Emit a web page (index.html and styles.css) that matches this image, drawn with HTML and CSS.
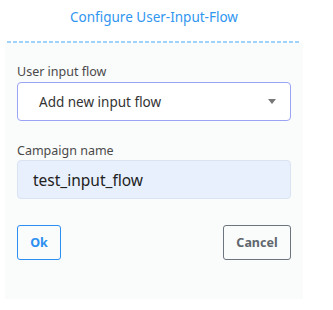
FILE: index.html
```html
<!DOCTYPE html>
<html lang="en">
<head>
    <meta charset="UTF-8">
    <title>Configure User-Input-Flow</title>
    <link rel="stylesheet" href="styles.css">
</head>
<body>
    <div class="modal">
        <div class="modal-header">
            <h5 class="modal-title">Configure User-Input-Flow</h5>
        </div>
        <div class="modal-body">
            <div class="field">
                <label class="field-label">User input flow</label>
                <div class="select-box">
                    <span>Add new input flow</span>
                    <span class="caret"></span>
                </div>
            </div>
            <div class="field">
                <label class="field-label">Campaign name</label>
                <div class="text-input">test_input_flow</div>
            </div>
            <div class="actions">
                <button class="btn btn-ok">Ok</button>
                <button class="btn btn-cancel">Cancel</button>
            </div>
        </div>
    </div>
</body>
</html>
```

FILE: styles.css
```css
body {
    margin: 0;
    background: #ffffff;
    font-family: "Noto Sans", "Open Sans", sans-serif;
    color: #333333;
}

.modal {
    width: 298px;
    margin-left: 5px;
}

.modal-header {
    padding: 6px 2px 0 2px;
    height: 37px;
    text-align: center;
}

.modal-title {
    margin: 0;
    font-size: 13.5px;
    font-weight: 400;
    line-height: 22px;
    color: #2f96f0;
    padding-bottom: 15px;
    background: repeating-linear-gradient(to right, #9fd3fc 0 4px, transparent 4px 6px) bottom / 100% 2px no-repeat;
}

.modal-body {
    background: #fafbfb;
    padding: 21px 12px 39px 12px;
}

.field {
    margin-bottom: 22px;
}

.field-label {
    display: block;
    font-size: 12.5px;
    color: #4a4a4a;
    line-height: 16px;
    margin-bottom: 2px;
}

.field + .field .field-label {
    margin-bottom: 1px;
}

.select-box {
    display: flex;
    align-items: center;
    justify-content: space-between;
    height: 37px;
    padding: 0 14px 0 21px;
    border: 1px solid #9aa3f5;
    border-radius: 4px;
    background: #ffffff;
    font-size: 13.5px;
    color: #333333;
}

.caret {
    width: 0;
    height: 0;
    border-left: 4px solid transparent;
    border-right: 4px solid transparent;
    border-top: 5px solid #777777;
}

.text-input {
    display: flex;
    align-items: center;
    height: 37px;
    padding: 0 15px;
    border: 1px solid #d9e3f1;
    border-radius: 4px;
    background: #e8f0fd;
    font-size: 15.5px;
    color: #222222;
}

.actions {
    display: flex;
    justify-content: space-between;
    margin-top: 26px;
}

.btn {
    height: 35px;
    background: transparent;
    border: 1px solid;
    border-radius: 3px;
    font-family: inherit;
    font-size: 12.5px;
    font-weight: 700;
    cursor: pointer;
}

.btn-ok {
    width: 44px;
    border-color: #2a8ff0;
    color: #2a8ff0;
}

.btn-cancel {
    width: 68px;
    border-color: #6c757d;
    color: #5f666d;
}
```
